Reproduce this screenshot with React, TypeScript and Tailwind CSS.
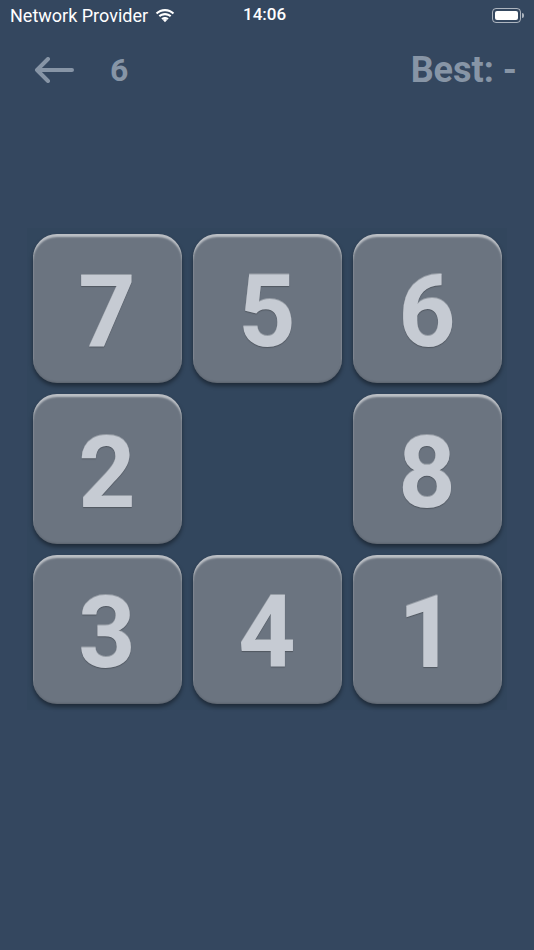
const TILES: (number | null)[] = [7, 5, 6, 2, null, 8, 3, 4, 1];

const Wifi = () => (
  <svg width="20" height="15" viewBox="0 0 22 16" fill="white">
    <path d="M11 3.2c3.3 0 6.3 1.3 8.5 3.4l1.6-1.7C18.4 2.3 14.9.8 11 .8S3.6 2.3.9 4.9l1.6 1.7C4.7 4.5 7.7 3.2 11 3.2z" />
    <path d="M11 7.6c2.1 0 4 .8 5.4 2.1l1.6-1.7C16.2 6.3 13.7 5.2 11 5.2S5.8 6.3 4 8l1.6 1.7C7 8.4 8.9 7.6 11 7.6z" />
    <path d="M11 11.8c1 0 1.9.4 2.5 1L11 15.4l-2.5-2.6c.6-.6 1.5-1 2.5-1z" />
    <path d="M11 9.6c1.6 0 3 .6 4 1.6l-1.5 1.6c-.6-.6-1.5-1-2.5-1s-1.9.4-2.5 1L7 11.2c1-1 2.4-1.6 4-1.6z" />
  </svg>
);

const Battery = () => (
  <div className="flex items-center">
    <div className="w-[29px] h-[15px] rounded-[4px] border border-white/60 p-[2px]">
      <div className="w-full h-full rounded-[2px] bg-white" />
    </div>
    <div className="w-[2px] h-[5px] rounded-r-sm bg-white/60 ml-[1px]" />
  </div>
);

const Tile = ({ n }: { n: number }) => (
  <div className="w-full h-full rounded-[24px] bg-[#6b7480] flex items-center justify-center pt-[8px] shadow-[inset_0_3px_2px_rgba(255,255,255,0.55),inset_0_-1px_2px_rgba(0,0,0,0.15),0_3px_4px_rgba(0,0,0,0.4)]">
    <span className="text-[100px] leading-none font-bold text-[#c6cbd3] [text-shadow:0_1px_1px_rgba(0,0,0,0.25),0_-1px_0_rgba(255,255,255,0.3)]">
      {n}
    </span>
  </div>
);

export default function App() {
  return (
    <div
      className="w-[534px] h-[950px] bg-[#34475f] overflow-hidden"
      style={{ fontFamily: 'Roboto, "Liberation Sans", Arial, sans-serif' }}
    >
      {/* status bar */}
      <div className="relative h-[30px] flex items-center px-[10px] text-white">
        <div className="flex items-center gap-[7px] text-[18px]">
          <span>Network Provider</span>
          <Wifi />
        </div>
        <span className="absolute left-[243px] text-[17px] font-medium">14:06</span>
        <div className="ml-auto">
          <Battery />
        </div>
      </div>

      {/* header */}
      <div className="h-[80px] flex items-center pl-[34px] pr-[17px] text-[#8795a6]">
        <svg width="40" height="26" viewBox="0 0 40 26" fill="none" stroke="currentColor" strokeWidth="4" strokeLinecap="round" strokeLinejoin="round">
          <path d="M38 13H3M14 2L3 13l11 11" />
        </svg>
        <span className="ml-[36px] text-[32px] font-bold">6</span>
        <span className="ml-auto text-[36px] font-bold">Best: -</span>
      </div>

      {/* board */}
      <div className="mt-[118px] ml-[27px] w-[480px] grid grid-cols-3 bg-[#32465d]">
        {TILES.map((n, i) => (
          <div key={i} className="h-[160.5px] p-[5.5px]">
            {n !== null && <Tile n={n} />}
          </div>
        ))}
      </div>
    </div>
  );
}
